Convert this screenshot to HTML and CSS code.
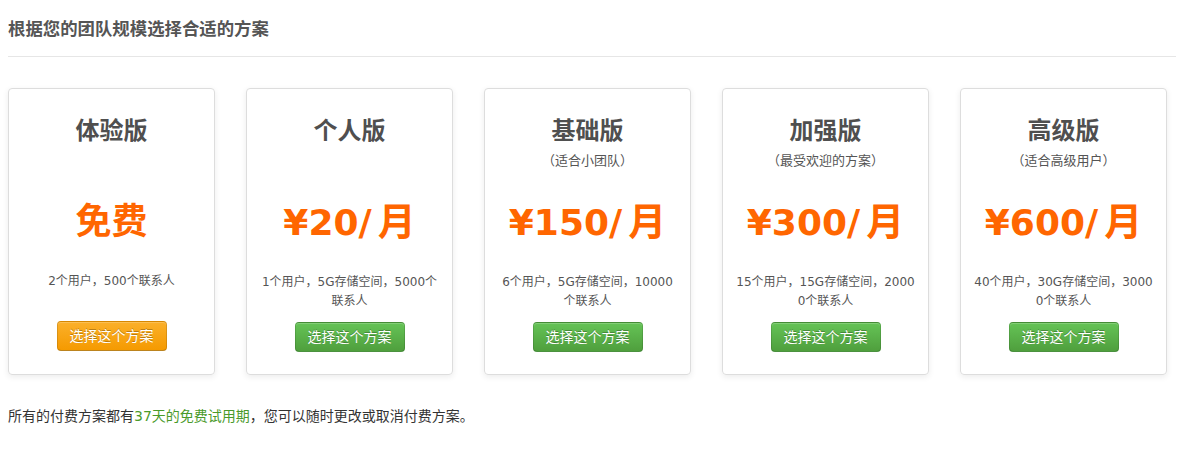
FILE: index.html
```html
<!DOCTYPE html>
<html lang="zh-CN">
<head>
    <meta charset="UTF-8">
    <title>选择方案</title>
    <link rel="stylesheet" href="styles.css">
</head>
<body>
    <div class="page">
        <h2 class="page-title">根据您的团队规模选择合适的方案</h2>

        <div class="plans">
            <div class="plan">
                <h3 class="plan-name">体验版</h3>
                <p class="plan-note"></p>
                <div class="plan-price">免费</div>
                <p class="plan-desc">2个用户，500个联系人</p>
                <a class="btn btn-warning" href="#">选择这个方案</a>
            </div>
            <div class="plan">
                <h3 class="plan-name">个人版</h3>
                <p class="plan-note"></p>
                <div class="plan-price">¥20/<span class="unit">月</span></div>
                <p class="plan-desc">1个用户，5G存储空间，5000个联系人</p>
                <a class="btn btn-success" href="#">选择这个方案</a>
            </div>
            <div class="plan">
                <h3 class="plan-name">基础版</h3>
                <p class="plan-note">（适合小团队）</p>
                <div class="plan-price">¥150/<span class="unit">月</span></div>
                <p class="plan-desc">6个用户，5G存储空间，10000个联系人</p>
                <a class="btn btn-success" href="#">选择这个方案</a>
            </div>
            <div class="plan">
                <h3 class="plan-name">加强版</h3>
                <p class="plan-note">（最受欢迎的方案）</p>
                <div class="plan-price">¥300/<span class="unit">月</span></div>
                <p class="plan-desc">15个用户，15G存储空间，20000个联系人</p>
                <a class="btn btn-success" href="#">选择这个方案</a>
            </div>
            <div class="plan">
                <h3 class="plan-name">高级版</h3>
                <p class="plan-note">（适合高级用户）</p>
                <div class="plan-price">¥600/<span class="unit">月</span></div>
                <p class="plan-desc">40个用户，30G存储空间，30000个联系人</p>
                <a class="btn btn-success" href="#">选择这个方案</a>
            </div>
        </div>

        <p class="trial">所有的付费方案都有<span class="trial-days">37天的免费试用期</span>，您可以随时更改或取消付费方案。</p>
    </div>
</body>
</html>
```

FILE: styles.css
```css
body {
    margin: 0;
    background: #fff;
    color: #555;
    font-family: "DejaVu Sans", "Noto Sans CJK SC", sans-serif;
}
.page {
    padding: 0 6px 0 8px;
}
.page-title {
    margin: 0;
    padding: 16px 0;
    font-family: "Noto Sans CJK SC", sans-serif;
    font-size: 17.4px;
    line-height: 24px;
    font-weight: bold;
    color: #555;
    border-bottom: 1px solid #e6e6e6;
}
.plans {
    display: flex;
    gap: 31px;
    margin-top: 31px;
}
.plan {
    box-sizing: border-box;
    width: 207px;
    height: 287px;
    padding-top: 27px;
    border: 1px solid #ddd;
    border-radius: 4px;
    box-shadow: 0 2px 6px rgba(0, 0, 0, 0.08);
    text-align: center;
}
.plan-name {
    margin: 0;
    font-size: 24px;
    line-height: 30px;
    font-weight: bold;
    color: #4f4f4f;
}
.plan-note {
    margin: 5px 0 0;
    height: 20px;
    font-size: 13px;
    line-height: 20px;
    color: #555;
}
.plan-price {
    margin-top: 26px;
    font-size: 36px;
    line-height: 50px;
    font-weight: bold;
    color: #ff6600;
}
.plan-price .unit {
    margin-left: 6px;
    font-size: 38px;
}
.plan-desc {
    margin: 25px 0 0;
    padding: 0 12px;
    height: 38px;
    font-size: 12px;
    line-height: 19px;
    color: #555;
    word-break: break-all;
}
.btn {
    display: inline-block;
    margin-top: 11px;
    padding: 0 12px;
    height: 28px;
    line-height: 28px;
    font-size: 14px;
    color: #fff;
    text-decoration: none;
    text-shadow: 0 -1px 0 rgba(0, 0, 0, 0.25);
    border: 1px solid rgba(0, 0, 0, 0.12);
    border-bottom-color: rgba(0, 0, 0, 0.25);
    border-radius: 4px;
    box-shadow: inset 0 1px 0 rgba(255, 255, 255, 0.2);
}
.btn-warning {
    background: linear-gradient(#fbb02a, #f59a00);
}
.btn-success {
    background: linear-gradient(#65c356, #4f9f3d);
}
.trial {
    margin: 31px 0 0;
    font-size: 14px;
    line-height: 20px;
    color: #333;
}
.trial-days {
    color: #4a9a2a;
}
```
